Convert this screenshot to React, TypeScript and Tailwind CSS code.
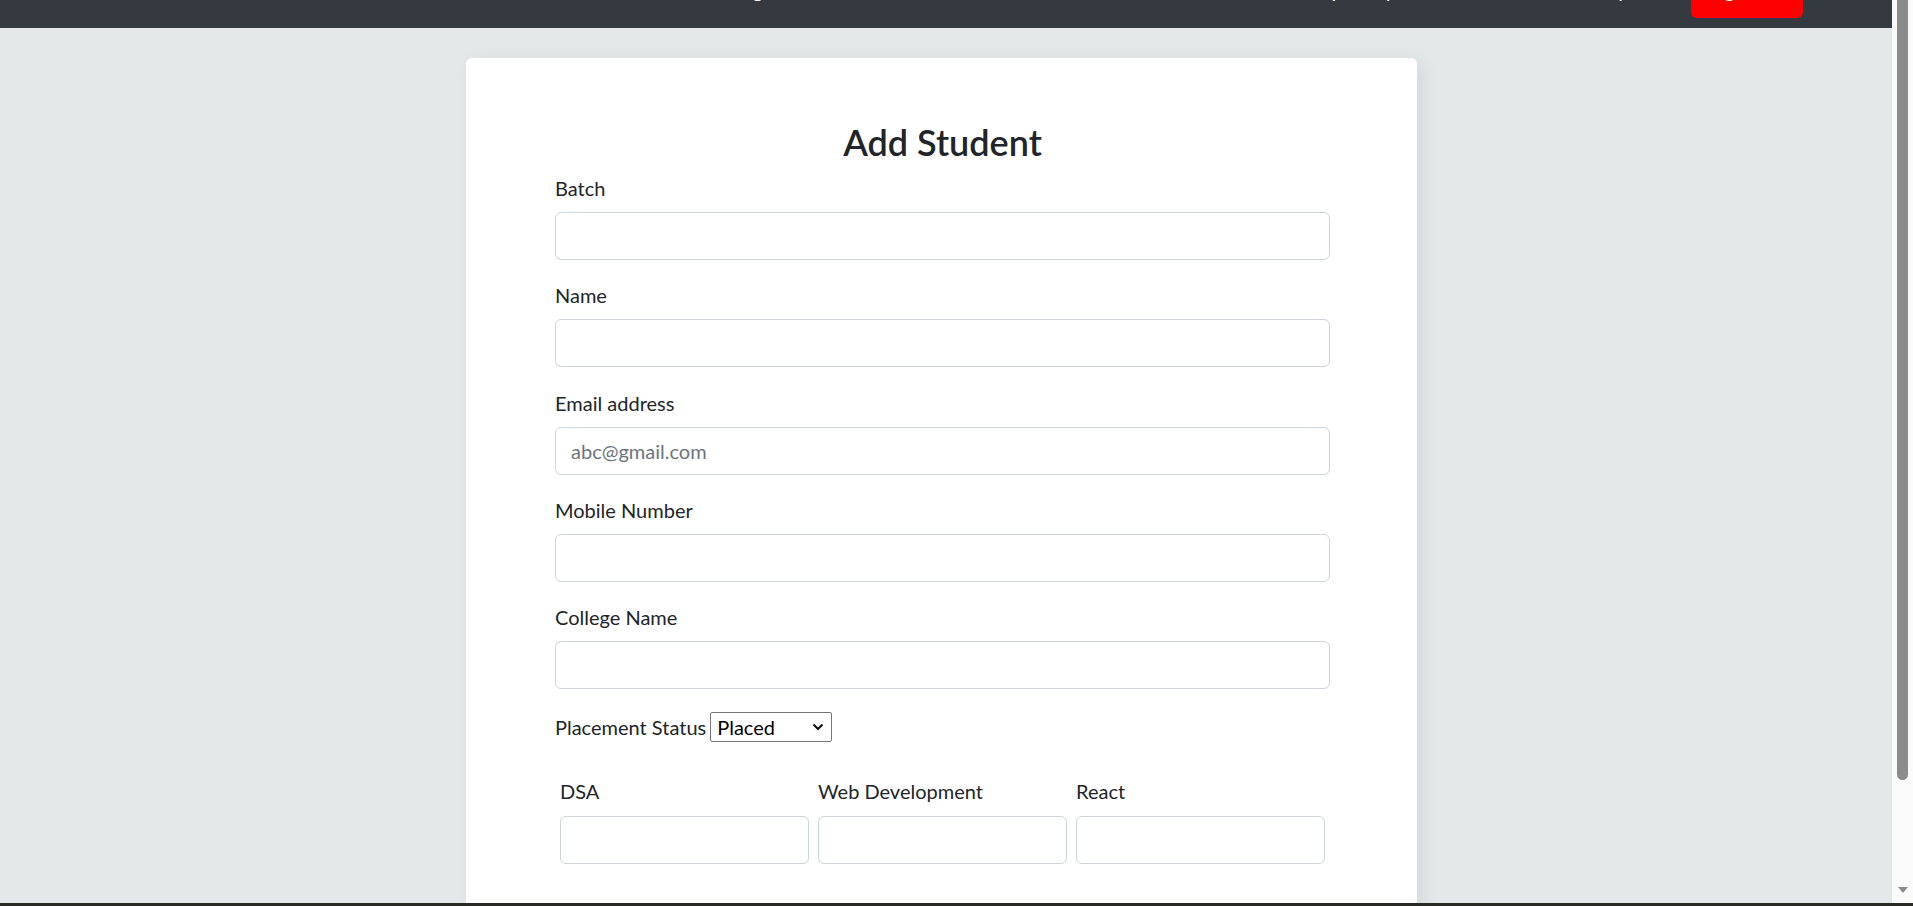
import React from "react";

const font = { fontFamily: "Lato, 'Noto Sans', sans-serif" };

function Field({ label, placeholder }: { label: string; placeholder?: string }) {
  return (
    <div className="mb-[19.3px]">
      <label className="block text-[20px] leading-[30px] pt-[1px] mb-[9px] text-[#212529]">{label}</label>
      <input
        type="text"
        placeholder={placeholder}
        className="block w-full h-[48px] px-[15px] text-[20px] text-[#212529] placeholder:text-[#6c757d] bg-white border border-[#ced4da] rounded-[6px] outline-none"
      />
    </div>
  );
}

function Score({ label }: { label: string }) {
  return (
    <div className="flex flex-col">
      <label className="block text-[20px] leading-[30px] pt-[1px] mb-[10.5px] text-[#212529]">{label}</label>
      <input
        type="text"
        className="block w-full h-[48px] px-[15px] text-[20px] bg-white border border-[#ced4da] rounded-[6px] outline-none"
      />
    </div>
  );
}

export default function App() {
  return (
    <div className="w-[1913px] h-[906px] overflow-hidden flex flex-col bg-[#e4e8e9]" style={font}>
      <div className="flex flex-row h-[903px]">
        <div className="w-[1892px] h-full overflow-hidden flex flex-col">
          <nav className="h-[28px] shrink-0 bg-[#343a40] overflow-hidden flex items-start text-white text-[20px] leading-[30px]">
            <div className="flex items-start -mt-[25px] w-full">
              <span className="ml-[694px] w-[80px] whitespace-nowrap">Training</span>
              <span className="ml-[535px] w-[110px] whitespace-nowrap">Report by</span>
              <span className="ml-[169px] w-[50px] whitespace-nowrap">Help</span>
              <span className="ml-[53px] h-[43px] w-[112px] bg-[#ff0000] rounded-[6px] flex items-start justify-center whitespace-nowrap">
                Sign Out
              </span>
            </div>
          </nav>
          <div className="ml-[466px] mt-[30px] w-[951px] bg-white rounded-t-[6px] shadow-[6px_4px_18px_rgba(0,0,0,0.07)] pl-[89px] pr-[87px] pt-[60px] pb-[60px] shrink-0">
            <h2 className="text-center text-[36px] leading-[48px] font-semibold text-[#212529] mb-[6px]">Add Student</h2>
            <Field label="Batch" />
            <Field label="Name" />
            <Field label="Email address" placeholder="abc@gmail.com" />
            <Field label="Mobile Number" />
            <Field label="College Name" />
            <div className="mt-[22px] flex items-center text-[20px] leading-[30px] text-[#212529] h-[31px]">
              <span>Placement Status</span>
              <div className="ml-[4px] w-[122px] h-[30px] border border-[#767676] rounded-[2px] bg-white flex items-center justify-between pl-[6px] pr-[6px] text-black">
                <span>Placed</span>
                <svg width="12" height="8" viewBox="0 0 12 8" className="mr-[1px]">
                  <path d="M1.5 1.5 L6 6 L10.5 1.5" fill="none" stroke="#111" strokeWidth="2" />
                </svg>
              </div>
            </div>
            <div className="mt-[32.5px] grid grid-cols-3 gap-x-[9px] px-[5px]">
              <Score label="DSA" />
              <Score label="Web Development" />
              <Score label="React" />
            </div>
          </div>
        </div>
        <div className="w-[21px] h-full bg-[#fafafa] flex flex-col items-center">
          <div className="w-[11px] h-[780px] bg-[#8b8b8b] rounded-b-[6px]"></div>
          <div className="flex-1"></div>
          <svg width="10" height="6" viewBox="0 0 10 6" className="mb-[10px]">
            <path d="M0 0 L10 0 L5 6 Z" fill="#8b8b8b" />
          </svg>
        </div>
      </div>
      <div className="h-[3px] w-full bg-[#2a2a24]"></div>
    </div>
  );
}
